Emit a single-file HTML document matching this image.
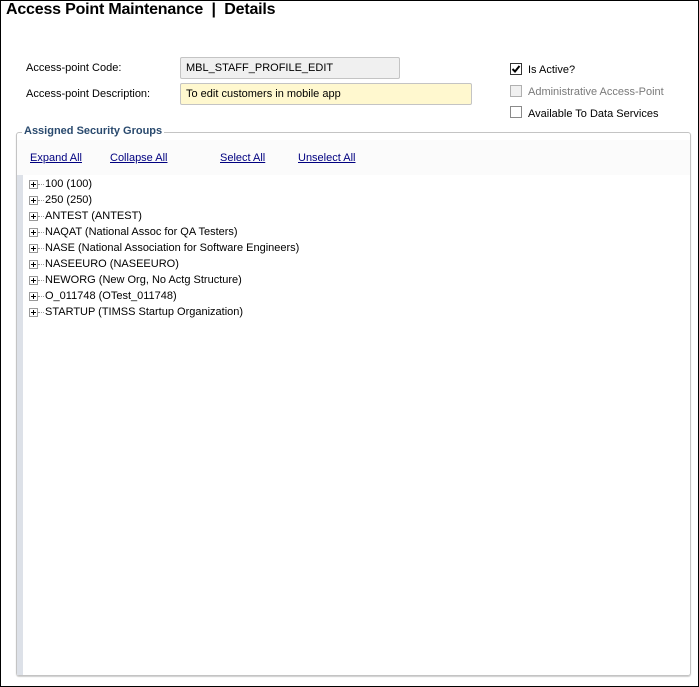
<!DOCTYPE html>
<html><head><style>
body{margin:0;width:699px;height:687px;position:relative;background:#fff;font-family:"Liberation Sans",sans-serif;overflow:hidden}
.frame{position:absolute;left:0;top:0;width:697px;height:685px;border:1px solid #000}
.t{position:absolute;white-space:nowrap;font-size:11px;color:#000}
.title{position:absolute;left:6px;top:1px;font-size:16px;font-weight:bold;letter-spacing:-0.2px}
.box{position:absolute;border:1px solid #c4c4c4;border-radius:2px;font-size:11px;line-height:20px;padding-left:5px;box-sizing:border-box}
.cb{position:absolute;left:510px;width:12px;height:12px;box-sizing:border-box;border:1px solid #8a8a8a;background:#fff}
.fs{position:absolute;left:16px;top:132px;width:675px;height:544px;border:1px solid #c4c4c4;border-radius:3px;box-sizing:border-box;box-shadow:0 1px 1px #ccc}
.lg{position:absolute;left:22px;top:125px;background:#fff;padding:0 2px;font-size:11px;font-weight:bold;color:#2a4a6e}
.bar{position:absolute;left:17px;top:140px;width:673px;height:35px;background:#fbfbfb}
.strip{position:absolute;left:17px;top:175px;width:6px;height:500px;background:#dde1e8}
a{position:absolute;top:152px;font-size:11px;color:#000080;text-decoration:underline}
.row{position:absolute;left:29px;font-size:11px;height:16px;line-height:16px;white-space:nowrap}
.row i{position:absolute;left:0;top:4px;width:7px;height:7px;border:1px solid #999;background:#fff}
.row i:before{content:"";position:absolute;left:1px;top:3px;width:5px;height:1px;background:#000}
.row i:after{content:"";position:absolute;left:3px;top:1px;width:1px;height:5px;background:#000}
.row b{position:absolute;left:9px;top:8px;width:6px;border-top:1px dotted #999}
.row span{position:absolute;left:16px;top:0}
</style></head><body>
<div class="frame"></div>
<div class="title">Access Point Maintenance &nbsp;|&nbsp; Details</div>
<div class="t" style="left:26px;top:62px">Access-point Code:</div>
<div class="t" style="left:26px;top:88px">Access-point Description:</div>
<div class="box" style="left:180px;top:57px;width:220px;height:22px;background:#f0f0f0">MBL_STAFF_PROFILE_EDIT</div>
<div class="box" style="left:180px;top:83px;width:292px;height:22px;background:#fff8cf">To edit customers in mobile app</div>
<div class="cb" style="top:63px;border-color:#333"><svg width="10" height="10" style="position:absolute;left:0;top:0"><path d="M1.5 5 L4 7.5 L8.5 2" stroke="#000" stroke-width="2" fill="none"/></svg></div>
<div class="t" style="left:528px;top:64px">Is Active?</div>
<div class="cb" style="top:85px;background:#f0f0f0;border-color:#b0b0b0"></div>
<div class="t" style="left:528px;top:86px;color:#7a7a7a">Administrative Access-Point</div>
<div class="cb" style="top:106px"></div>
<div class="t" style="left:528px;top:108px">Available To Data Services</div>
<div class="fs"></div>
<div class="bar"></div>
<div class="strip"></div>
<div class="lg">Assigned Security Groups</div>
<a style="left:30px">Expand All</a>
<a style="left:110px">Collapse All</a>
<a style="left:220px">Select All</a>
<a style="left:298px">Unselect All</a>
<div class="row" style="top:176px"><i></i><b></b><span>100 (100)</span></div>
<div class="row" style="top:192px"><i></i><b></b><span>250 (250)</span></div>
<div class="row" style="top:208px"><i></i><b></b><span>ANTEST (ANTEST)</span></div>
<div class="row" style="top:224px"><i></i><b></b><span>NAQAT (National Assoc for QA Testers)</span></div>
<div class="row" style="top:240px"><i></i><b></b><span>NASE (National Association for Software Engineers)</span></div>
<div class="row" style="top:256px"><i></i><b></b><span>NASEEURO (NASEEURO)</span></div>
<div class="row" style="top:272px"><i></i><b></b><span>NEWORG (New Org, No Actg Structure)</span></div>
<div class="row" style="top:288px"><i></i><b></b><span>O_011748 (OTest_011748)</span></div>
<div class="row" style="top:304px"><i></i><b></b><span>STARTUP (TIMSS Startup Organization)</span></div>
</body></html>
